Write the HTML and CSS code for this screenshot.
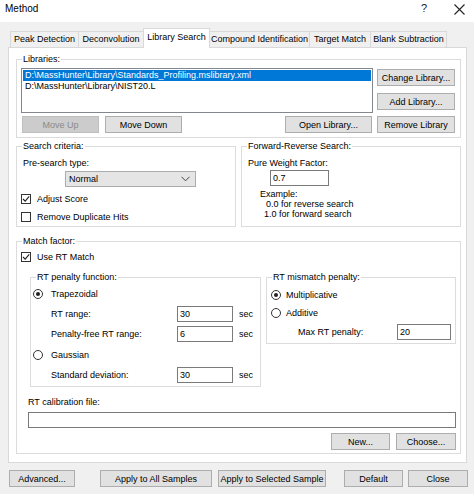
FILE: index.html
```html
<!DOCTYPE html>
<html>
<head>
   <meta charset="UTF-8">
   <title>Method</title>
   <link rel="stylesheet" href="styles.css">
</head>
<body>
   <div class="titlebar">
      <span class="title">Method</span>
      <span class="help">?</span>
      <span class="close">
         <svg width="11" height="11" viewBox="0 0 11 11"><path d="M0.5 0.5 L10.5 10.5 M10.5 0.5 L0.5 10.5" stroke="#222" stroke-width="1.1" fill="none"/></svg>
      </span>
   </div>

   <div class="tabs">
      <span class="tab w-pd">Peak Detection</span>
      <span class="tab w-dc">Deconvolution</span>
      <span class="tab sel w-ls">Library Search</span>
      <span class="tab w-ci">Compound Identification</span>
      <span class="tab w-tm">Target Match</span>
      <span class="tab w-bs">Blank Subtraction</span>
   </div>

   <div class="panel">
      <fieldset class="grp libraries">
         <legend>Libraries:</legend>
         <div class="lib-body">
            <div class="lib-left">
               <div class="listbox">
                  <div class="item sel">D:\MassHunter\Library\Standards_Profiling.mslibrary.xml</div>
                  <div class="item">D:\MassHunter\Library\NIST20.L</div>
               </div>
               <div class="lib-btns">
                  <button class="btn b-up" disabled>Move Up</button>
                  <button class="btn b-down">Move Down</button>
                  <button class="btn b-open">Open Library...</button>
               </div>
            </div>
            <div class="lib-right">
               <button class="btn b-change">Change Library...</button>
               <button class="btn b-add">Add Library...</button>
               <button class="btn b-remove">Remove Library</button>
            </div>
         </div>
      </fieldset>

      <div class="row2">
         <fieldset class="grp search">
            <legend>Search criteria:</legend>
            <div class="lbl">Pre-search type:</div>
            <div class="combo">
               <span>Normal</span>
               <svg width="9" height="6" viewBox="0 0 9 6"><path d="M0.5 0.8 L4.5 4.8 L8.5 0.8" stroke="#444" stroke-width="1" fill="none"/></svg>
            </div>
            <div class="check first">
               <span class="box"><svg width="8" height="8" viewBox="0 0 8 8"><path d="M1 4 L3.2 6.2 L7.2 1.4" stroke="#222" stroke-width="1.1" fill="none"/></svg></span>
               <span>Adjust Score</span>
            </div>
            <div class="check">
               <span class="box"></span>
               <span>Remove Duplicate Hits</span>
            </div>
         </fieldset>
         <fieldset class="grp fwd">
            <legend>Forward-Reverse Search:</legend>
            <div class="lbl">Pure Weight Factor:</div>
            <div class="input pwf">0.7</div>
            <div class="example">
               <div>Example:</div>
               <div class="ex1">0.0 for reverse search</div>
               <div class="ex2">1.0 for forward search</div>
            </div>
         </fieldset>
      </div>

      <fieldset class="grp match">
         <legend>Match factor:</legend>
         <div class="check rtmatch">
            <span class="box"><svg width="8" height="8" viewBox="0 0 8 8"><path d="M1 4 L3.2 6.2 L7.2 1.4" stroke="#222" stroke-width="1.1" fill="none"/></svg></span>
            <span>Use RT Match</span>
         </div>

         <div class="subrow">
            <fieldset class="grp penalty">
               <legend>RT penalty function:</legend>
               <div class="radio r-trap"><span class="dot on"></span><span class="rlabel">Trapezoidal</span></div>
               <div class="field f-range">
                  <span class="flabel">RT range:</span>
                  <span class="input num">30</span>
                  <span class="unit">sec</span>
               </div>
               <div class="field f-free">
                  <span class="flabel">Penalty-free RT range:</span>
                  <span class="input num">6</span>
                  <span class="unit">sec</span>
               </div>
               <div class="radio r-gauss"><span class="dot"></span><span class="rlabel">Gaussian</span></div>
               <div class="field f-std">
                  <span class="flabel">Standard deviation:</span>
                  <span class="input num">30</span>
                  <span class="unit">sec</span>
               </div>
            </fieldset>

            <fieldset class="grp mismatch">
               <legend>RT mismatch penalty:</legend>
               <div class="radio r-mult"><span class="dot on"></span><span class="rlabel2">Multiplicative</span></div>
               <div class="radio r-add"><span class="dot"></span><span class="rlabel2">Additive</span></div>
               <div class="field f-max">
                  <span class="flabel2">Max RT penalty:</span>
                  <span class="input num2">20</span>
               </div>
            </fieldset>
         </div>

         <div class="lbl cal-lbl">RT calibration file:</div>
         <div class="input cal"></div>
         <div class="cal-btns">
            <button class="btn b-new">New...</button>
            <button class="btn b-choose">Choose...</button>
         </div>
      </fieldset>
   </div>

   <div class="footer">
      <button class="btn b-adv">Advanced...</button>
      <button class="btn b-all">Apply to All Samples</button>
      <button class="btn b-selected">Apply to Selected Sample</button>
      <button class="btn b-default">Default</button>
      <button class="btn b-close">Close</button>
   </div>
</body>
</html>
```

FILE: styles.css
```css
* {
   box-sizing: border-box;
}
html, body {
   margin: 0;
   padding: 0;
}
body {
   width: 474px;
   height: 494px;
   overflow: hidden;
   background: #f0f0f0;
   font-family: "Liberation Sans", Arial, sans-serif;
   font-size: 9px;
   color: #000;
}

/* title bar */
.titlebar {
   height: 22px;
   background: white;
   display: flex;
   align-items: flex-start;
   padding-top: 2px;
}
.title {
   font-size: 10px;
   line-height: 13px;
   margin-left: 5px;
}
.help {
   font-size: 11px;
   line-height: 13px;
   margin-left: auto;
   color: #222;
}
.close {
   margin-left: 27px;
   margin-right: 9px;
   margin-top: 2px;
   display: flex;
}

/* tabs */
.tabs {
   display: flex;
   align-items: flex-end;
   height: 19px;
   margin-top: 6px;
   padding-left: 10px;
}
.tab {
   height: 16px;
   line-height: 15px;
   text-align: center;
   border: 1px solid #d9d9d9;
   border-bottom: none;
   margin-right: -1px;
   background: #f0f0f0;
}
.tab.sel {
   height: 20px;
   line-height: 17px;
   background: white;
   margin-bottom: -1px;
   position: relative;
   z-index: 1;
}
.w-pd { width: 69px; }
.w-dc { width: 66px; }
.w-ls { width: 67px; }
.w-ci { width: 101px; }
.w-tm { width: 62px; }
.w-bs { width: 77px; }

.panel {
   margin-left: 8px;
   width: 459px;
   height: 416px;
   background: white;
   border: 1px solid #d9d9d9;
}

/* group boxes */
.grp {
   border: 1px solid #dcdcdc;
   margin: 0;
   padding: 0;
   min-width: 0;
}
.grp legend {
   margin-left: 5px;
   padding: 0 1px;
   line-height: 12px;
   font-size: 9px;
}

.btn {
   display: block;
   height: 17px;
   padding: 0;
   margin: 0;
   font-family: "Liberation Sans", Arial, sans-serif;
   font-size: 9px;
   color: #000;
   background: #e1e1e1;
   border: 1px solid #adadad;
   border-radius: 0;
}
.btn:disabled {
   background: #cccccc;
   border-color: #bfbfbf;
   color: #8a8a8a;
}

.input {
   height: 16px;
   border: 1px solid #7a7a7a;
   background: white;
   line-height: 14px;
   padding-left: 2px;
}

/* libraries */
.libraries {
   margin: 5px 0 0 7px;
   width: 445px;
}
.lib-body {
   display: flex;
   padding: 0 4px 4px 4px;
}
.lib-left {
   width: 352px;
}
.listbox {
   margin-top: 3px;
   height: 45px;
   border: 1px solid #828790;
   padding-top: 1px;
}
.item {
   height: 11px;
   line-height: 11px;
   padding-left: 2px;
   margin: 0 1px;
   white-space: nowrap;
}
.item.sel {
   background: #0078d7;
   color: white;
}
.lib-btns {
   display: flex;
   margin-top: 3px;
}
.b-up { width: 77px; margin-left: 1px; }
.b-down { width: 77px; margin-left: 6px; }
.b-open { width: 87px; margin-left: auto; margin-right: 1px; }
.lib-right {
   width: 78px;
   margin-left: 4px;
   display: flex;
   flex-direction: column;
}
.b-change { margin-top: 4px; }
.b-add { margin-top: 7px; }
.b-remove { margin-top: 6px; }

/* search criteria / forward-reverse */
.row2 {
   display: flex;
   margin: 2px 0 0 7px;
}
.search, .fwd {
   width: 220px;
   padding-bottom: 3px;
}
.fwd {
   margin-left: 5px;
}
.lbl {
   line-height: 12px;
   margin: 5px 0 0 6px;
}
.combo {
   margin: 2px 0 0 48px;
   width: 131px;
   height: 16px;
   background: #e5e5e5;
   border: 1px solid #acacac;
   display: flex;
   align-items: center;
   justify-content: space-between;
   padding: 0 5px 0 3px;
}
.check {
   display: flex;
   align-items: center;
   height: 13px;
   margin: 5px 0 0 4px;
}
.box {
   width: 10px;
   height: 10px;
   border: 1px solid #333;
   background: white;
   margin-right: 6px;
   display: flex;
   align-items: center;
   justify-content: center;
}
.pwf {
   margin: 1px 0 0 28px;
   width: 59px;
}
.example {
   margin: 3px 0 0 18px;
   line-height: 10px;
}
.ex1 { padding-left: 6px; }
.ex2 { padding-left: 4px; }

/* match factor */
.match {
   margin: 8px 0 0 7px;
   width: 445px;
   padding-bottom: 3px;
}
.rtmatch {
   margin-top: 3px;
}
.subrow {
   display: flex;
   align-items: flex-start;
   margin: 8px 0 0 13px;
}
.penalty {
   width: 231px;
   padding-bottom: 3px;
}
.mismatch {
   width: 190px;
   margin-left: 5px;
   padding-bottom: 3px;
}
.radio {
   display: flex;
   align-items: center;
   height: 13px;
}
.dot {
   width: 10px;
   height: 10px;
   border: 1px solid #333;
   border-radius: 50%;
   background: white;
   display: flex;
   align-items: center;
   justify-content: center;
}
.dot.on::after {
   content: "";
   width: 4px;
   height: 4px;
   border-radius: 50%;
   background: #222;
}
.rlabel { margin-left: 8px; }
.rlabel2 { margin-left: 5px; }
.r-trap { margin: 4px 0 0 2px; }
.r-gauss { margin: 6px 0 0 2px; }
.r-mult { margin: 5px 0 0 4px; }
.r-add { margin: 5px 0 0 4px; }

.field {
   display: flex;
   align-items: center;
   height: 16px;
}
.f-range { margin: 6px 0 0 20px; }
.f-free { margin: 4px 0 0 20px; }
.f-std { margin: 6px 0 0 20px; }
.f-max { margin: 5px 0 0 31px; }
.flabel { width: 126px; }
.flabel2 { width: 99px; }
.num { width: 56px; }
.num2 { width: 54px; }
.unit { margin-left: 6px; }

.cal-lbl {
   margin: 9px 0 0 11px;
}
.cal {
   margin: 4px 0 0 11px;
   width: 428px;
}
.cal-btns {
   display: flex;
   justify-content: flex-end;
   margin-top: 5px;
   padding-right: 4px;
}
.b-new { width: 59px; margin-right: 6px; }
.b-choose { width: 60px; }

/* bottom buttons */
.footer {
   display: flex;
   margin-top: 7px;
   padding-left: 9px;
}
.b-adv { width: 66px; }
.b-all { width: 112px; margin-left: 25px; }
.b-selected { width: 108px; margin-left: 6px; }
.b-default { width: 59px; margin-left: 18px; }
.b-close { width: 60px; margin-left: 5px; }
```
